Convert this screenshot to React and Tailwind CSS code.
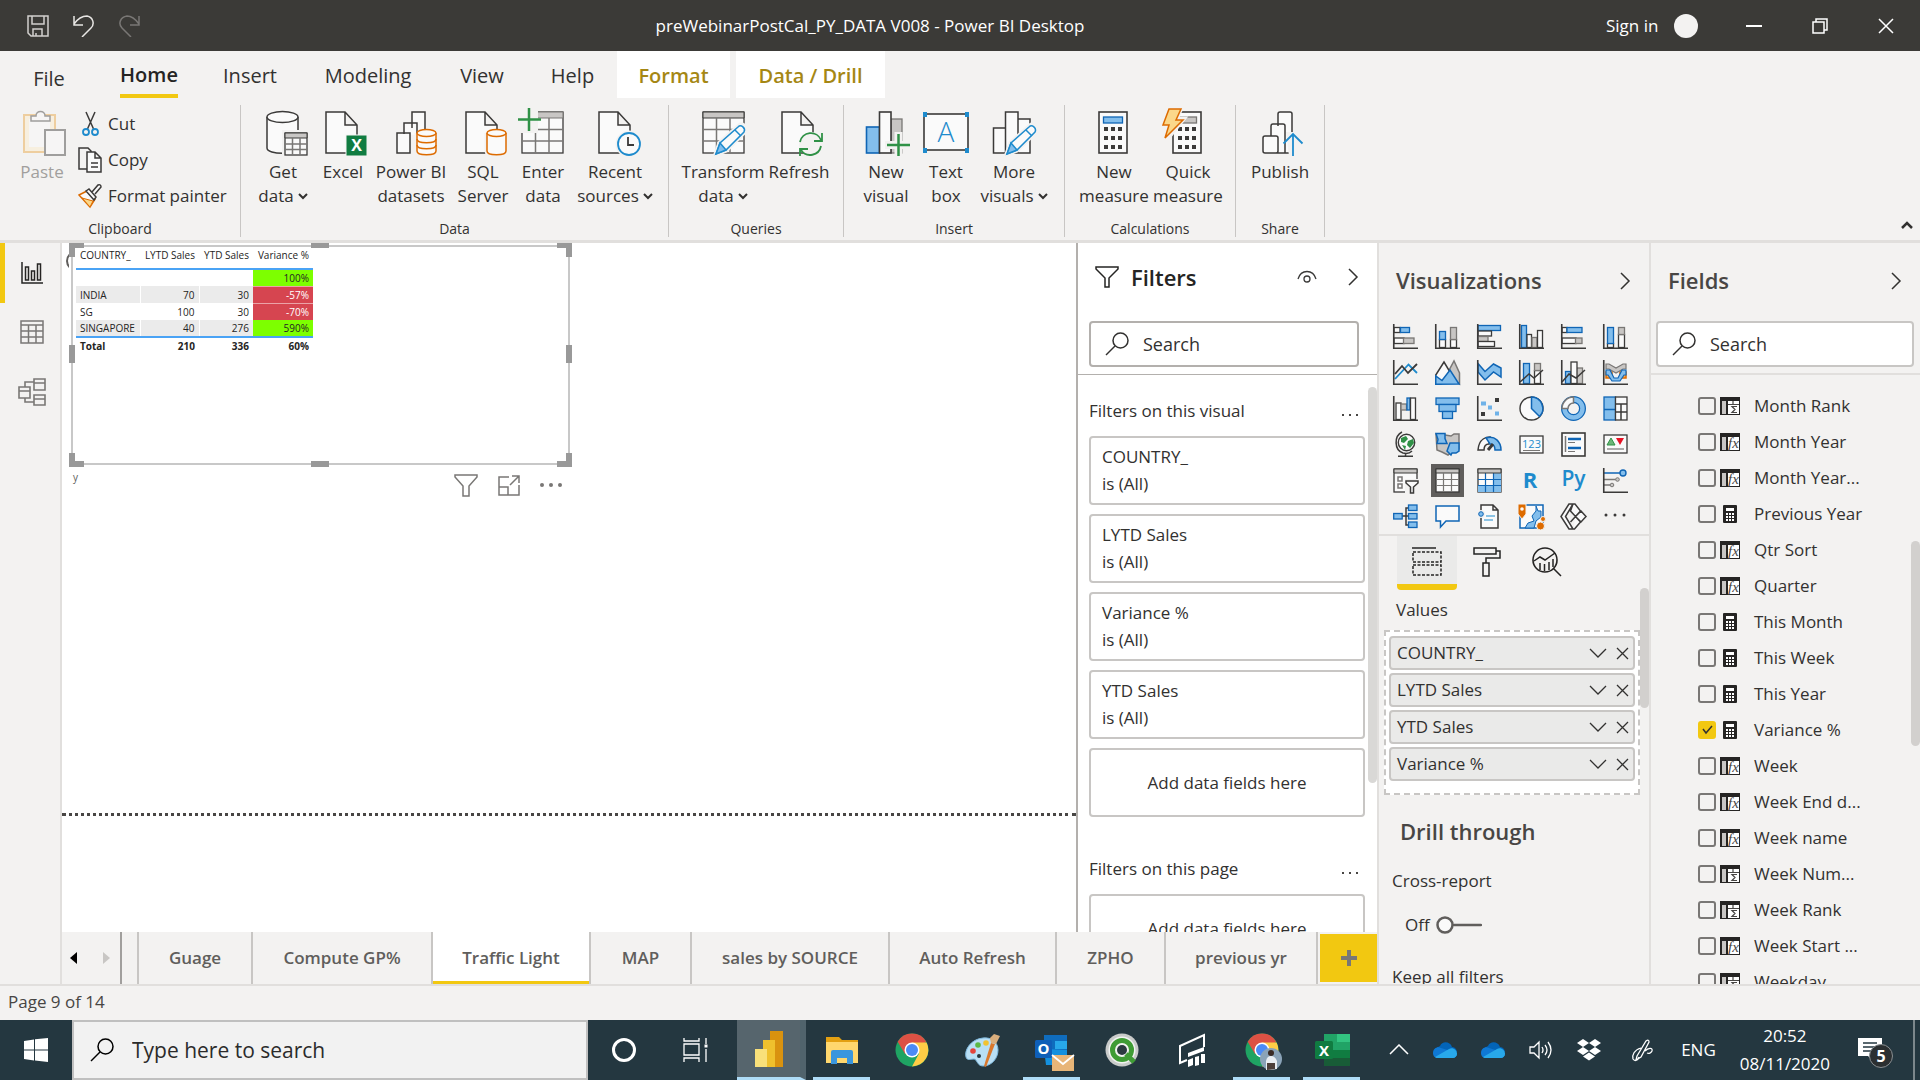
import { useState } from 'react';

const DARK = '#3b3a39';
const FILLS = { w: '#fafafa', b: '#83beec', g: '#c8c6c4', o: '#fff4e6' };
const STROKES = { w: DARK, b: '#0f65b5', g: '#797775', o: '#dd6b00' };

function Box({ x, y, w, h, k = 'w', s = 1.3 }) {
  return <rect x={x} y={y} width={w} height={h} fill={FILLS[k]} stroke={STROKES[k]} strokeWidth={s} />;
}

function Line({ d, c = DARK, s = 1.5, f = 'none', ...rest }) {
  return <path d={d} stroke={c} strokeWidth={s} fill={f} {...rest} />;
}

function Chevron({ d = 'M2 1l8 8-8 8', w = 12, h = 18, s = 1.5, c = '#323130' }) {
  return (
    <svg width={w} height={h} viewBox={`0 0 ${w} ${h}`} aria-hidden="true">
      <Line d={d} c={c} s={s} />
    </svg>
  );
}

function SearchIcon({ c = '#323130' }) {
  return (
    <svg width="24" height="24" viewBox="0 0 24 24" className="shrink-0" aria-hidden="true">
      <circle cx="15.5" cy="8.5" r="7.5" fill="none" stroke={c} strokeWidth="1.5" />
      <Line d="M10 14L1 23" c={c} />
    </svg>
  );
}

/* ---------- ribbon icons, drawn on a 46 x 48 box ---------- */

const Page = () => <Line d="M3 45V4h19l12 13v28zM22 4v13h12" f="#fafafa" />;

const Cylinder = ({ rings = false }) => (
  <g fill="#fafafa" stroke="#dd6b00" strokeWidth="1.5">
    <path d="M24 25v18c0 5 19 5 19 0V25" stroke="#f3f2f1" strokeWidth="5" />
    <path d="M24 25v18c0 5 19 5 19 0V25" />
    <ellipse cx="33.5" cy="25" rx="9.5" ry="3.5" />
    {rings && <path d="M24 31c0 5 19 5 19 0M24 37c0 5 19 5 19 0" fill="none" />}
  </g>
);

const Pencil = () => (
  <g>
    <path d="M15 46l4-11 19-17c3-3 8 1 6 5L25 42z" fill="#f3f2f1" stroke="#f3f2f1" strokeWidth="5" />
    <path d="M15 46l4-11 18-16c3-3 8 1 6 5L25 42z" fill="#fafafa" stroke="#1e8bcd" strokeWidth="1.5" />
    <path d="M15 46l4-11 6 7z" fill="#83beec" stroke="#1e8bcd" strokeWidth="1.5" />
    <path d="M34 22l6 6" stroke="#1e8bcd" strokeWidth="1.5" />
  </g>
);

function CalcBody({ x = 8, bar = 'b' }) {
  return (
    <g>
      <Box x={x} y={4} w={28} h={41} s={1.6} />
      <Box x={x + 4.5} y={9} w={19} h={6} k={bar} />
      {[19, 28, 37].map(y => [5, 12, 19].map(c => <rect key={`${y}-${c}`} x={x + c} y={y} width="4" height="4" fill={DARK} />))}
    </g>
  );
}

const RIBBON_ICONS = {
  paste: (
    <g opacity="0.45">
      <path d="M5 7h31v37H5z" fill="#fdeccb" stroke="#e8a33d" strokeWidth="2" />
      <path d="M10 11h21v28H10z" fill="#fafafa" />
      <path d="M12 13V8h5c0-6 9-6 9 0h5v5z" fill="#fafafa" stroke={DARK} strokeWidth="1.5" />
      <path d="M26 22h20v25H26z" fill="#fafafa" stroke={DARK} strokeWidth="2" />
    </g>
  ),
  get: (
    <g transform="translate(4 0)">
      <Line d="M3 9v31c0 7 31 7 31 0V9" f="#fafafa" />
      <ellipse cx="18.5" cy="9" rx="15.5" ry="5.5" fill="#fafafa" stroke={DARK} strokeWidth="1.5" />
      <path d="M18 22h28v26H18z" fill="#f3f2f1" />
      <Box x={21} y={25} w={22} h={22} />
      <path d="M21 25h22v5H21z" fill="#c8c6c4" stroke={DARK} />
      <Line d="M21 36h22M21 41.500h22M28.500 30v17M36 30v17" c="#797775" />
    </g>
  ),
  excel: (
    <g transform="translate(3 0)">
      <Page />
      <rect x="23" y="27" width="21" height="21" fill="#107c41" stroke="#f3f2f1" />
      <text x="33.5" y="43" textAnchor="middle" fontSize="16" fontWeight="700" fill="#fff">X</text>
    </g>
  ),
  datasets: (
    <g transform="translate(5 0)">
      <Line d="M19 20V4h13v24M11 26V15h13v12M4 25h13v20H4z" f="#fafafa" />
      <Cylinder rings />
    </g>
  ),
  sql: <g transform="translate(3 0)"><Page /><Cylinder /></g>,
  enter: (
    <g transform="translate(-2 0)">
      <Box x={4} y={4} w={41} h={41} />
      <path d="M16 4h29v6H16z" fill="#c8c6c4" stroke="#797775" />
      <Line d="M4 21.500h41M4 33h41M17.500 10v35M31 10v35" c="#797775" />
      <path d="M0 0h20v25H0z" fill="#f3f2f1" />
      <Line d="M11 0v23M0 11.500h23" c="#2f9146" s={2.5} />
    </g>
  ),
  recent: (
    <g transform="translate(4 0)">
      <Page />
      <circle cx="33" cy="36" r="13.5" fill="#f3f2f1" />
      <circle cx="33" cy="36" r="11" fill="#fafafa" stroke="#1e8bcd" strokeWidth="1.8" />
      <Line d="M32 29v8h6" s={1.8} />
    </g>
  ),
  transform: (
    <g transform="translate(1 0)">
      <Box x={2} y={4} w={41} h={41} />
      <path d="M2 4h41v6H2z" fill="#c8c6c4" stroke={DARK} />
      <Line d="M2 21.500h41M2 33h41M15.500 10v35M29 10v35" c="#797775" />
      <Pencil />
    </g>
  ),
  refresh: (
    <g transform="translate(3 0)">
      <Page />
      <circle cx="32" cy="36" r="12" fill="#f3f2f1" />
      <Line d="M21 34a11 11 0 0 1 21-2M42 38a11 11 0 0 1-20 4M43 25v8h-8M21 48v-7h8" c="#2f9146" s={1.8} />
    </g>
  ),
  visual: (
    <g transform="translate(2 0)">
      <Box x={1.5} y={19} w={13} h={26} k="b" s={1.6} />
      <Box x={26} y={11} w={11} h={34} k="g" />
      <Box x={14.5} y={4} w={11.5} h={41} s={1.6} />
      <path d="M20 33h26v8H20zM29.500 24h8v24h-8z" fill="#f3f2f1" />
      <Line d="M33.500 26v22M22 37h23" c="#2f9146" s={2.5} />
    </g>
  ),
  text: (
    <g>
      <Box x={1} y={6} w={44} h={36} s={1.6} />
      {[0, 42].map(x => [4, 40].map(y => <rect key={`${x}-${y}`} x={x} y={y} width="4" height="5" fill="#1e8bcd" />))}
      <text x="23" y="34" textAnchor="middle" fontSize="28" fontWeight="300" fill="#1e8bcd">A</text>
    </g>
  ),
  more: (
    <g transform="translate(1 0)">
      <Line d="M1.500 20h12v25h-12zM13.500 4H26v41H13.500zM26 11h12v34H26z" f="#fafafa" />
      <Pencil />
    </g>
  ),
  measure: <CalcBody />,
  quick: (
    <g transform="translate(-5 0)">
      <CalcBody x={13} bar="g" />
      <path d="M9 0h12l-5 11h7L6 32l3-15H3z" fill="#fbd88a" stroke="#f3f2f1" strokeWidth="5" />
      <path d="M9 1h12l-5 11h7L5 30l4-13H3z" fill="#fbd88a" stroke="#dd6b00" strokeWidth="1.5" />
    </g>
  ),
  publish: (
    <g transform="translate(3 0)">
      <Line d="M18 18V6q0-2 2-2h10q2 0 2 2v39H18M11 28V18q0-2 2-2h10q2 0 2 2v27H17M3 30q0-2 2-2h11q2 0 2 2v13q0 2-2 2H5q-2 0-2-2z" f="#fafafa" />
      <path d="M26 24h14v24H29z" fill="#f3f2f1" />
      <Line d="M33 48V26M23.500 35.500L33 26l9.500 9.500" c="#1e8bcd" s={1.8} />
    </g>
  ),
};

const RIBBON_GROUPS = [
  {
    name: 'Data',
    box: 'w-[428px]',
    items: [
      { icon: 'get', lines: ['Get', 'data'], drop: true, w: 'w-[60px]' },
      { icon: 'excel', lines: ['Excel'], w: 'w-[60px]' },
      { icon: 'datasets', lines: ['Power BI', 'datasets'], w: 'w-[76px]' },
      { icon: 'sql', lines: ['SQL', 'Server'], w: 'w-[68px]' },
      { icon: 'enter', lines: ['Enter', 'data'], w: 'w-[52px]' },
      { icon: 'recent', lines: ['Recent', 'sources'], drop: true, w: 'w-[92px]' },
    ],
  },
  {
    name: 'Queries',
    box: 'w-[175px]',
    items: [
      { icon: 'transform', lines: ['Transform', 'data'], drop: true, w: 'w-[84px]' },
      { icon: 'refresh', lines: ['Refresh'], w: 'w-[68px]' },
    ],
  },
  {
    name: 'Insert',
    box: 'w-[221px]',
    items: [
      { icon: 'visual', lines: ['New', 'visual'], w: 'w-[60px]' },
      { icon: 'text', lines: ['Text', 'box'], w: 'w-[60px]' },
      { icon: 'more', lines: ['More', 'visuals'], drop: true, w: 'w-[76px]' },
    ],
  },
  {
    name: 'Calculations',
    box: 'w-[171px]',
    items: [
      { icon: 'measure', lines: ['New', 'measure'], w: 'w-[74px]' },
      { icon: 'quick', lines: ['Quick', 'measure'], w: 'w-[74px]' },
    ],
  },
  {
    name: 'Share',
    box: 'w-[89px]',
    items: [{ icon: 'publish', lines: ['Publish'], w: 'w-[64px]' }],
  },
];

function RibbonButton({ icon, lines, drop, w, muted }) {
  return (
    <button className={`${w} flex flex-col items-center gap-1 whitespace-nowrap ${muted ? 'text-[#a19f9d]' : ''}`}>
      <svg width="46" height="48" viewBox="0 0 46 48" overflow="visible" aria-hidden="true">{RIBBON_ICONS[icon]}</svg>
      <span className="flex flex-col items-center leading-6">
        {lines.map((line, i) => (
          <span key={line} className="flex items-center gap-1">
            {line}
            {drop && i === lines.length - 1 && <Chevron d="M1 1l4 4 4-4" w={10} h={7} s={2} />}
          </span>
        ))}
      </span>
    </button>
  );
}

function TitleBar() {
  return (
    <header className="h-[51px] shrink-0 flex items-center bg-[#3b3a37] text-white text-[17px]">
      <div className="w-[160px] flex items-center gap-6 pl-[27px]">
        <button aria-label="Save">
          <svg width="22" height="22" viewBox="0 0 22 22"><Line d="M1 1h20v20H4l-3-3zM5 1v8h12V1M6 21v-7h9v7M9 21v-3" c="#d2d0ce" /></svg>
        </button>
        <button aria-label="Undo">
          <svg width="22" height="22" viewBox="0 0 22 22"><Line d="M1 1v9h9M1 9C6 2 10 1 14 1c6 1 8 8 4 12l-9 9" c="#e8e6e4" /></svg>
        </button>
        <button aria-label="Redo">
          <svg width="22" height="22" viewBox="0 0 22 22"><Line d="M20 1v9h-9M20 9C15 2 11 1 8 1 1 2-1 9 3 13l9 9" c="#797775" /></svg>
        </button>
      </div>
      <h1 className="flex-1 text-center">preWebinarPostCal_PY_DATA V008 - Power BI Desktop</h1>
      <div className="w-[340px] flex items-center pl-[26px]">
        <button>Sign in</button>
        <span className="ml-4 size-6 rounded-full bg-[#f3f2f1]" />
        <button aria-label="Minimize" className="ml-12"><Chevron d="M0 8h16" w={16} h={16} s={2} c="#fff" /></button>
        <button aria-label="Restore" className="ml-[50px]"><Chevron d="M1 4h11v11H1zM4 4V1h11v11h-3" w={16} h={16} c="#fff" /></button>
        <button aria-label="Close" className="ml-[50px]"><Chevron d="M1 1l14 14M15 1L1 15" w={16} h={16} c="#fff" /></button>
      </div>
    </header>
  );
}

function RibbonTabs() {
  const tabs = [
    ['Insert', 'w-[100px]'],
    ['Modeling', 'w-[136px]'],
    ['View', 'w-[92px]'],
    ['Help', 'w-[89px]'],
  ];
  return (
    <nav className="flex h-[54px] items-start text-xl leading-6 text-[#323130]">
      <button className="w-[98px] h-[47px] pt-2">File</button>
      <button className="w-[102px] h-[47px] flex justify-center">
        <span className="h-full flex items-center border-b-4 border-[#f2c811] pt-1 font-semibold text-[#252423]">Home</span>
      </button>
      {tabs.map(([name, w]) => <button key={name} className={`${w} h-[47px] pt-[2px]`}>{name}</button>)}
      <button className="w-[113px] h-[47px] bg-white pt-[2px] font-semibold text-[#a58714]">Format</button>
      <button className="ml-[6px] w-[149px] h-[47px] bg-white pt-[2px] font-semibold text-[#a58714]">Data / Drill</button>
    </nav>
  );
}

function Ribbon() {
  return (
    <section className="relative z-10 shrink-0 bg-[#f3f2f1] border-b-[3px] border-[#e1dfdd]">
      <RibbonTabs />
      <div className="flex h-[135px] pb-[3px] text-[17px] text-[#323130]">
        <div className="w-[241px] flex flex-col border-r border-[#c8c6c4] pt-[3px]">
          <div className="flex flex-1 pl-[14px]">
            <RibbonButton icon="paste" lines={['Paste']} w="w-[56px]" muted />
            <div className="flex flex-col gap-[10px] pl-2 pt-[3px] leading-6">
              <button className="flex items-center gap-[6px]">
                <svg width="24" height="26" viewBox="0 0 24 26" aria-hidden="true">
                  <Line d="M8 1l8 18M17 1L9 19" />
                  <g fill="none" stroke="#1e8bcd" strokeWidth="1.8"><circle cx="8" cy="21" r="3" /><circle cx="17" cy="21" r="3" /></g>
                </svg>
                Cut
              </button>
              <button className="flex items-center gap-[6px]">
                <svg width="24" height="26" viewBox="0 0 24 26" aria-hidden="true">
                  <Line d="M1 1h9l3 3v18H1z" />
                  <Line d="M9 5h8l6 6v14H9zM17 5v6h6M13 16h7M13 20h7" f="#fafafa" />
                </svg>
                Copy
              </button>
              <button className="flex items-center gap-[6px] whitespace-nowrap">
                <svg width="24" height="26" viewBox="0 0 24 26" aria-hidden="true">
                  <path d="M1 12l8-4 8 8-5 8z" fill="#fafafa" stroke="#dd6b00" strokeWidth="1.5" />
                  <path d="M4 15l11 3-3 6z" fill="#fbd88a" stroke="#dd6b00" />
                  <Line d="M8 8l3-2 7 8-2 3zM14 9l6-7q3-1 3 2l-6 7" f="#fafafa" />
                </svg>
                Format painter
              </button>
            </div>
          </div>
          <span className="text-center text-sm leading-4">Clipboard</span>
        </div>
        {RIBBON_GROUPS.map(g => (
          <div key={g.name} className={`${g.box} flex flex-col border-r border-[#c8c6c4] pt-[3px]`}>
            <div className="flex flex-1 items-start pl-3">
              {g.items.map(item => <RibbonButton key={item.icon} {...item} />)}
            </div>
            <span className="text-center text-sm leading-4">{g.name}</span>
          </div>
        ))}
        <button aria-label="Collapse ribbon" className="ml-auto mr-[6px] self-end">
          <Chevron d="M2 7l5-5 5 5" w={14} h={16} s={2.5} />
        </button>
      </div>
    </section>
  );
}

function ViewRail() {
  return (
    <nav className="w-[62px] shrink-0 flex flex-col border-r-2 border-[#e1dfdd] bg-[#f3f2f1]">
      <button aria-label="Report" className="h-[60px] flex items-center border-l-[5px] border-[#f2c811] pl-4">
        <svg width="22" height="22" viewBox="0 0 22 22"><Line d="M1 0v21h21M4.500 5h3v13h-3zM10.500 9h3v9h-3zM16.500 2h3v16h-3z" c="#252423" /></svg>
      </button>
      <button aria-label="Data" className="h-[58px] flex items-center justify-center pl-1">
        <svg width="24" height="24" viewBox="0 0 24 24"><Line d="M1 1h22v22H1zM1 5h22M1 11h22M1 17h22M8.500 5v18M16 5v18" c="#797775" /></svg>
      </button>
      <button aria-label="Model" className="h-[62px] flex items-center justify-center pl-1">
        <svg width="28" height="28" viewBox="0 0 28 28"><Line d="M16 1h11v11H16zM16 5h11M16 17h11v10H16zM16 21h11M1 9h11v11H1zM1 13h11M7 9V4h9M7 20v4h9" c="#797775" s={1.6} /></svg>
      </button>
    </nav>
  );
}

const SALES = [
  { country: '', lytd: '', ytd: '', variance: '100%', up: true },
  { country: 'INDIA', lytd: '70', ytd: '30', variance: '-57%' },
  { country: 'SG', lytd: '100', ytd: '30', variance: '-70%' },
  { country: 'SINGAPORE', lytd: '40', ytd: '276', variance: '590%', up: true },
];

function SalesTable() {
  return (
    <table className="table-fixed w-[237px] border-collapse text-[10px] leading-3 text-[#252423]">
      <thead>
        <tr className="h-[25px] border-b-2 border-[#4aa3f5] align-top text-left whitespace-nowrap">
          <th className="w-[64px] pt-[5px] pl-1 font-normal">COUNTRY_</th>
          <th className="w-[59px] pt-[5px] pr-1 text-right font-normal">LYTD Sales</th>
          <th className="w-[54px] pt-[5px] pr-1 text-right font-normal">YTD Sales</th>
          <th className="w-[60px] pt-[5px] pr-1 text-right font-normal">Variance %</th>
        </tr>
      </thead>
      <tbody>
        {SALES.map((r, i) => (
          <tr key={r.variance} className={`h-[17px] ${i % 2 ? 'bg-[#ebebeb]' : ''}`}>
            <td className="pl-1 border-r border-white">{r.country}</td>
            <td className="pr-1 text-right border-r border-white">{r.lytd}</td>
            <td className="pr-1 text-right">{r.ytd}</td>
            <td className={`pr-1 text-right ${r.up ? 'bg-[#7dff00]' : 'bg-[#d64550] text-white border-t border-[#eba2a7]'}`}>{r.variance}</td>
          </tr>
        ))}
      </tbody>
      <tfoot>
        <tr className="h-4 border-t-2 border-[#4aa3f5] font-bold">
          <td className="pl-1">Total</td>
          <td className="pr-1 text-right">210</td>
          <td className="pr-1 text-right">336</td>
          <td className="pr-1 text-right">60%</td>
        </tr>
      </tfoot>
    </table>
  );
}

function Canvas() {
  return (
    <main className="relative flex-1 min-w-0 bg-white overflow-hidden">
      <div className="absolute left-1 top-2 size-5 rounded-full border-2 border-[#605e5c]" />
      {/* selected visual with its resize handles */}
      <div className="absolute left-[7px] top-0 w-[503px] h-[224px] bg-white">
        <div className="absolute inset-[2px] border-2 border-[#c8c8c8]" />
        <div className="absolute left-0 top-0 w-[15px] h-[14px] border-l-[6px] border-t-[5px] border-[#999]" />
        <div className="absolute right-0 top-0 w-[15px] h-[14px] border-r-[6px] border-t-[5px] border-[#999]" />
        <div className="absolute left-0 bottom-0 w-[15px] h-[14px] border-l-[6px] border-b-[6px] border-[#999]" />
        <div className="absolute right-0 bottom-0 w-[15px] h-[14px] border-r-[6px] border-b-[6px] border-[#999]" />
        <div className="absolute left-[242px] top-0 w-[18px] h-[5px] bg-[#999]" />
        <div className="absolute left-[242px] bottom-0 w-[18px] h-[6px] bg-[#999]" />
        <div className="absolute left-0 top-[102px] w-[6px] h-[18px] bg-[#999]" />
        <div className="absolute right-0 top-[102px] w-[6px] h-[18px] bg-[#999]" />
        <div className="absolute left-[7px] top-[1px]"><SalesTable /></div>
      </div>
      <span className="absolute left-[11px] top-[226px] text-[10px] leading-4 text-[#605e5c]">y</span>
      <div className="absolute left-[392px] top-[230px] flex items-center gap-5">
        <button aria-label="Filters on visual">
          <svg width="24" height="24" viewBox="0 0 24 24"><Line d="M1 2h22v2l-8 9v10H9V13L1 4z" c="#797775" /></svg>
        </button>
        <button aria-label="Focus mode">
          <svg width="22" height="22" viewBox="0 0 22 22"><Line d="M11 3H1v18h20V11M1 13h9v8M12 11L21 2M14 2h7v7" c="#797775" /></svg>
        </button>
        <button aria-label="More options">
          <svg width="24" height="6" viewBox="0 0 24 6" fill="#797775"><circle cx="2" cy="3" r="2" /><circle cx="11" cy="3" r="2" /><circle cx="20" cy="3" r="2" /></svg>
        </button>
      </div>
      <div className="absolute inset-x-0 top-[570px] border-t-[3px] border-dotted border-[#484644]" />
    </main>
  );
}

function SearchBox({ id, border }) {
  return (
    <label htmlFor={id} className={`flex h-[46px] items-center gap-[14px] rounded-sm border-2 ${border} bg-white pl-[14px] text-[#323130]`}>
      <SearchIcon />
      <input id={id} type="text" placeholder="Search" aria-label="Search" className="min-w-0 flex-1 bg-transparent text-lg outline-none placeholder:text-[#323130]" />
    </label>
  );
}

function FilterCard({ name }) {
  return (
    <div className="h-[69px] rounded-sm border-2 border-[#c8c6c4] pl-[11px] pt-[5px] leading-[27px]">
      <p>{name}</p>
      <p>is (All)</p>
    </div>
  );
}

function DropCard() {
  return <div className="h-[69px] flex items-center justify-center rounded-sm border-2 border-[#c8c6c4]">Add data fields here</div>;
}

function FilterHeading({ children }) {
  return (
    <div className="flex items-center justify-between pr-[6px] leading-6">
      <h3>{children}</h3>
      <button aria-label="More options">
        <svg width="18" height="12" viewBox="0 0 18 12" fill="#484644"><path d="M1 9h2v2H1zM8 9h2v2H8zM15 9h2v2h-2z" /></svg>
      </button>
    </div>
  );
}

const FILTERS = ['COUNTRY_', 'LYTD Sales', 'Variance %', 'YTD Sales'];
const VALUES = ['COUNTRY_', 'LYTD Sales', 'YTD Sales', 'Variance %'];

function FiltersPane() {
  return (
    <aside className="relative w-[301px] shrink-0 flex flex-col overflow-hidden border-l-2 border-[#b3b0ad] bg-white text-[17px] text-[#323130]">
      <div className="h-[132px] shrink-0 border-b border-[#b3b0ad] pl-[11px] pr-[18px]">
        <div className="flex h-[68px] mb-[10px] items-center pl-[6px]">
          <svg width="24" height="24" viewBox="0 0 24 24" aria-hidden="true"><Line d="M1 2h22v2l-9 9v9h-4v-9L1 4z" c="#252423" /></svg>
          <h2 className="ml-3 text-[22px] font-semibold text-[#252423]">Filters</h2>
          <button aria-label="Hide filters" className="ml-auto mr-[30px]">
            <svg width="20" height="14" viewBox="0 0 20 14"><Line d="M1 9C4-1 16-1 19 9" s={1.3} /><circle cx="10" cy="9" r="3" fill="none" stroke={DARK} strokeWidth="1.3" /></svg>
          </button>
          <button aria-label="Collapse filters"><Chevron /></button>
        </div>
        <SearchBox id="filter-search" border="border-[#b3b0ad]" />
      </div>
      <div className="flex shrink-0 flex-col pl-[11px] pr-3 pt-6">
        <FilterHeading>Filters on this visual</FilterHeading>
        <div className="mt-[13px] flex flex-col gap-[9px]">
          {FILTERS.map(v => <FilterCard key={v} name={v} />)}
          <DropCard />
        </div>
        <div className="mt-10"><FilterHeading>Filters on this page</FilterHeading></div>
        <div className="mt-[13px]"><DropCard /></div>
      </div>
      <div className="absolute right-0 top-[144px] h-[396px] w-[9px] rounded-full bg-[#d9d8d6]" />
    </aside>
  );
}

const PAGES = [
  ['Guage', 'w-[114px]'],
  ['Compute GP%', 'w-[180px]'],
  ['Traffic Light', 'w-[158px]'],
  ['MAP', 'w-[101px]'],
  ['sales by SOURCE', 'w-[198px]'],
  ['Auto Refresh', 'w-[167px]'],
  ['ZPHO', 'w-[109px]'],
  ['previous yr', 'w-[152px]'],
];

function PageTabs() {
  const [active, setActive] = useState('Traffic Light');
  return (
    <nav className="flex h-[52px] shrink-0 bg-[#f3f2f1] text-[17px] font-semibold text-[#605e5c]">
      <div className="flex w-[60px] items-center justify-between border-r-2 border-[#a19f9d] pl-2 pr-[10px]">
        <button aria-label="Previous page"><svg width="7" height="12" viewBox="0 0 7 12"><path d="M7 0v12L0 6z" fill="#000" /></svg></button>
        <button aria-label="Next page"><svg width="7" height="12" viewBox="0 0 7 12"><path d="M0 0v12l7-6z" fill="#c8c6c4" /></svg></button>
      </div>
      <div className="w-[17px] border-r-2 border-[#c8c6c4]" />
      {PAGES.map(([name, w]) => (
        <button
          key={name}
          onClick={() => setActive(name)}
          className={`${w} whitespace-nowrap border-r-2 border-r-[#c8c6c4] ${name === active ? 'bg-white shadow-[inset_0_-3px_0_#f2c811]' : ''}`}
        >
          {name}
        </button>
      ))}
      <button aria-label="New page" className="my-[2px] ml-[2px] flex flex-1 items-center justify-center bg-[#f2c811]">
        <Chevron d="M8 0v16M0 8h16" w={16} h={16} s={4} c="#797775" />
      </button>
    </nav>
  );
}

/* ---------- visual gallery, drawn on a 25 x 25 box ---------- */

const Axis = () => <Line d="M.75 0v24.250H25" s={1.6} />;

const VISUALS = [
  ['Stacked bar chart', <><Box x={1} y={3.5} w={6} h={5} /><Box x={7.5} y={3.5} w={9} h={5} k="b" /><Box x={1} y={14} w={10} h={5.5} k="w" /><Box x={10.5} y={14} w={10.5} h={5.5} k="g" /><Axis /></>],
  ['Stacked column chart', <><Box x={4.5} y={15.5} w={6} h={8} /><Box x={4.5} y={7.5} w={6} h={8} k="b" /><Box x={15.5} y={15.5} w={6} h={8} /><Box x={15.5} y={3.5} w={6} h={12} k="g" /><Axis /></>],
  ['Clustered bar chart', <><Box x={1} y={1.5} w={22.5} h={5} k="b" /><Box x={1} y={7} w={13.5} h={5} /><Box x={1} y={12.5} w={10} h={5} k="g" /><Box x={1} y={17.5} w={16.5} h={5} /><Axis /></>],
  ['Clustered column chart', <><Box x={2.5} y={1.5} w={5} h={22} k="b" /><Box x={8} y={10.5} w={4.5} h={13} /><Box x={13} y={13.5} w={5} h={10} k="g" /><Box x={18.5} y={6.5} w={5} h={17} /><Axis /></>],
  ['100% stacked bar chart', <><Box x={1} y={3.5} w={5} h={5} /><Box x={6} y={3.5} w={15} h={5} k="b" /><Box x={1} y={14} w={14} h={5.5} /><Box x={14.5} y={14} w={6.5} h={5.5} k="g" /><Axis /></>],
  ['100% stacked column chart', <><Box x={4.5} y={19.5} w={6} h={4} /><Box x={4.5} y={3.5} w={6} h={16} k="b" /><Box x={15.5} y={10.5} w={6} h={13} /><Box x={15.5} y={3.5} w={6} h={7} k="g" /><Axis /></>],
  ['Line chart', <><Line d="M2 19L15.500 4.500 24 13" c="#1e8bcd" s={1.8} /><Line d="M2 14L9 6l6 7 9-9" s={1.8} /><Axis /></>],
  ['Area chart', <><Line d="M12 14l7-13 5.500 12v11z" c="#797775" f="#c8c6c4" /><Line d="M.75 24V15L9 2l6 10-9 12z" f="#fafafa" /><Line d="M.75 24.250V16L7 20.500 15 10l9 14z" c={STROKES.b} f={FILLS.b} /></>],
  ['Stacked area chart', <><Line d="M1 3.500l7 8 8.500-7.500L24 8v9l-7.500-5L8 20l-7-8z" c={STROKES.b} f={FILLS.b} /><Axis /></>],
  ['Line and stacked column chart', <><Box x={4.5} y={3.5} w={6} h={20} k="b" /><Box x={15.5} y={10.5} w={6} h={13} /><Box x={15.5} y={3.5} w={6} h={7} k="g" /><Line d="M1 22l9-8 5 4 9-8" /><Axis /></>],
  ['Line and clustered column chart', <><Box x={4.5} y={11.5} w={5} h={12} k="b" /><Box x={15.5} y={8} w={6} h={15.5} k="g" /><Box x={10} y={2} w={6} h={21.5} /><Line d="M1 22l7-8 7 4 9-8" /><Axis /></>],
  ['Ribbon chart', <><Line d="M3 12h6v6H3zM17 12h6v6h-6z" c="#dd6b00" f="#f7a64a" /><Line d="M3 4h3l7 4 7-4h3v5h-3l-7 4-7-4H3z" c="#797775" f="#c8c6c4" s={1.2} /><Line d="M3 10h4l4 8h4l4-8h4v5h-2l-4 6H9l-4-6H3z" c={STROKES.b} f={FILLS.b} s={1.2} /><Axis /></>],
  ['Waterfall chart', <><Box x={3} y={7} w={5} h={16.5} /><Box x={8} y={8} w={5.5} h={6} k="g" /><Box x={14} y={2} w={3} h={12} k="b" /><Box x={17.5} y={2} w={5} h={21.5} /><Axis /></>],
  ['Funnel', <><Box x={1} y={2} w={23} h={6.5} k="b" /><Box x={4} y={8.5} w={17} h={7} k="b" /><Box x={7.5} y={15.5} w={10} h={7} k="b" /></>],
  ['Scatter chart', <><path d="M18 2h4v4h-4zM4 16h4v4H4z" fill={DARK} /><path d="M4 5.500h5v4H4zM11 9.500h4v4h-4zM18 15.500h4v4h-4z" fill="#6fb2e8" /><Axis /></>],
  ['Pie chart', <><circle cx="12.5" cy="12.5" r="11.5" fill="#fafafa" stroke={DARK} strokeWidth="1.4" /><Line d="M12.500 12.500V1a11.500 11.500 0 0 1 8 19.500z" c={STROKES.b} f={FILLS.b} /></>],
  ['Donut chart', <><circle cx="12.5" cy="12.5" r="9" fill="none" stroke="#0f65b5" strokeWidth="7" /><circle cx="12.5" cy="12.5" r="9" fill="none" stroke="#83beec" strokeWidth="4.5" /><Line d="M1 12.500A11.500 11.500 0 0 1 12.500 1v6A5.500 5.500 0 0 0 7 12.500z" c="#797775" f="#fafafa" /></>],
  ['Treemap', <><Box x={1} y={1} w={11.5} h={23} k="b" /><Line d="M1 13.500h11.500" c={STROKES.b} /><Box x={12.5} y={1} w={11.5} h={23} /><Line d="M12.500 8H24M18 8v16M12.500 16H24" /></>],
  ['Map', <><circle cx="13.5" cy="10.5" r="8.2" fill="#fafafa" stroke={DARK} strokeWidth="1.4" /><path d="M8 6l5-2 2 3-4 4-3-1zM15 9l5-2 1 4-4 5-3-3zM9 13l4 1-1 4z" fill="#2f9146" /><Line d="M9 0C1 4 1 18 10 21c4 1 7 0 9-2M12.500 21v3M5 24.250h15" /></>],
  ['Filled map', <><Line d="M1 2l9 1 6 1 3-2h5v15l-6 2-5 4-6-3-5-2z" c="#797775" f="#c8c6c4" /><Line d="M1 1.500h9v5l2 5H2l1-4zM24 11v8l-3 2h-4l-1 2-4-4 3-8z" c={STROKES.b} f={FILLS.b} /></>],
  ['Gauge', <><Line d="M1 18C2 6 10 5 13 5l-1 7c-4 0-5 3-5 6z" f="#fafafa" /><Line d="M9 6c9-3 15 4 15 12h-6c0-4-2-6-5-6z" c={STROKES.b} f={FILLS.b} /><Line d="M11 18l5-6" s={3} /></>],
  ['Card', <><Box x={1} y={4} w={23} h={17} /><text x="12.500" y="16" textAnchor="middle" fontSize="11" fill="#1e8bcd">123</text><Line d="M4 18.500h17" s={1} c="#797775" /></>],
  ['Multi-row card', <><Box x={1} y={1} w={23} h={23} s={1.6} /><Line d="M4.500 4v16" c="#797775" /><Line d="M7 7h13M7 16h13" c="#0f65b5" s={2.5} /><Line d="M7 10.500h7M7 19.500h7" c="#797775" s={1.2} /></>],
  ['KPI', <><Box x={1} y={3} w={23} h={18} /><path d="M4 13l4-7 4 7z" fill="#6cb577" stroke="#2f9146" /><path d="M13 6h8l-4 7z" fill="#e81123" /><Line d="M4 17h17" c="#797775" s={1.2} /></>],
  ['Slicer', <><Box x={1} y={1} w={23} h={23} /><path d="M1 1h23v4H1z" fill="#c8c6c4" stroke={DARK} /><Line d="M5 9h4v4H5zM5 16h4v4H5z" c="#797775" /><path d="M12 11h14v16H12z" fill="#f3f2f1" /><Line d="M13 13h12v2l-4.500 4v6h-3v-6L13 15z" f="#fafafa" /></>],
  ['Table', <><Box x={1} y={1} w={23} h={23} /><path d="M1 1h23v4H1z" fill="#c8c6c4" stroke={DARK} /><Line d="M1 11.500h23M1 17.500h23M8.500 5v19M16.500 5v19" c="#797775" s={1.2} /></>],
  ['Matrix', <><Box x={1} y={1} w={23} h={23} /><path d="M16.500 5H24v19H1v-6h15.500z" fill="#83beec" /><Line d="M1 11.500h23M1 17.500h23M8.500 5v19M16.500 5v19" c="#0f65b5" s={1.2} /><path d="M1 1h23v4H1z" fill="#c8c6c4" stroke={DARK} /></>],
  ['R script visual', <text x="11" y="20" textAnchor="middle" fontSize="22" fontWeight="700" fill="#1e8bcd">R</text>],
  ['Python visual', <text x="12.500" y="18" textAnchor="middle" fontSize="21" fontWeight="600" fill="#1e8bcd">Py</text>],
  ['Key influencers', <><Line d="M1 5h16" c="#0f65b5" /><circle cx="20" cy="5" r="3" fill="#83beec" stroke="#0f65b5" strokeWidth="1.4" /><Line d="M1 11.500h12M1 17h6" c="#797775" /><g fill="#c8c6c4" stroke="#797775"><circle cx="14.500" cy="11.500" r="1.800" /><circle cx="9" cy="17" r="1.800" /></g><Axis /></>],
  ['Decomposition tree', <><Line d="M9 12h7M16 4h-3v17h3" /><Box x={0.7} y={9.500} w={8.500} h={5.500} k="b" /><Box x={15.500} y={1} w={8.500} h={5.500} k="b" /><Box x={15.500} y={9.500} w={8.500} h={5.500} k="b" /><Box x={15.500} y={18} w={8.500} h={5.500} k="b" /></>],
  ['Q&A', <Line d="M1 2h23v15H11l-5.500 6v-6H1z" c="#0f65b5" f="#fafafa" />],
  ['Smart narrative', <><Line d="M4 1h12l5 5v18H4zM16 1v5h5" f="#fafafa" /><circle cx="4" cy="10" r="4" fill="#f3f2f1" /><circle cx="4" cy="10" r="2.300" fill="#83beec" stroke="#0f65b5" /><Line d="M9 12h9M7 16h9" c="#1e8bcd" s={1.2} /></>],
  ['ArcGIS map', <><Line d="M1 1h23v23H1z" c="#0f65b5" f="#fafafa" /><path d="M17 2v5l-4 5 2 5-6 2-3 5h9l2-7 5-4V7h-3z" fill="#83beec" stroke="#0f65b5" /><path d="M-1 0h8v10l-4 5-4-5z" fill="#dd6b00" stroke="#f3f2f1" /><circle cx="3" cy="5" r="1.800" fill="#fafafa" /><circle cx="21.500" cy="22" r="4" fill="#dd6b00" stroke="#f3f2f1" /><circle cx="24" cy="15" r="2.500" fill="#dd6b00" stroke="#f3f2f1" /></>],
  ['Power Apps', <Line d="M8 0L0 12.500 8 25h4L4.500 12.500 12 0zM12 0h2l5.500 7-5 5.500-5-5.500zM20 7l5 5.500-5 5.500-5.500-5.500zM14.500 12.500l5 5.500-6 7h-1M9.500 18l5-5.500" f="#fafafa" />],
  ['More visuals', <g fill={DARK}><circle cx="3" cy="11" r="1.500" /><circle cx="12" cy="11" r="1.500" /><circle cx="21" cy="11" r="1.500" /></g>],
];

function PaneTitle({ children }) {
  return (
    <div className="flex h-[75px] shrink-0 items-center justify-between pl-[17px] pr-[18px]">
      <h2 className="text-[22px] font-semibold text-[#484644]">{children}</h2>
      <button aria-label={`Collapse ${children}`}><Chevron /></button>
    </div>
  );
}

function VisualizationsPane() {
  return (
    <aside className="relative w-[272px] shrink-0 flex flex-col overflow-hidden border-l-2 border-[#e1dfdd] bg-[#f3f2f1] text-[17px] text-[#323130]">
      <PaneTitle>Visualizations</PaneTitle>
      <div className="grid h-[216px] w-[252px] shrink-0 grid-cols-6 grid-rows-6 ml-[5px]">
        {VISUALS.map(([name, art]) => (
          <button key={name} aria-label={name} className="flex items-center justify-center">
            <span className={name === 'Table' ? 'bg-[#605e5c] p-1' : ''}>
              <svg width="25" height="25" viewBox="0 0 25 25" overflow="visible">{art}</svg>
            </span>
          </button>
        ))}
      </div>
      <div className="flex shrink-0 border-t-2 border-[#e1dfdd] pl-[18px]">
        <button aria-label="Fields" className="flex h-[54px] w-[60px] items-center justify-center rounded-b border-b-[6px] border-[#f2c811] bg-[#eaeae9] pt-1">
          <svg width="30" height="30" viewBox="0 0 30 30"><Line d="M0 1h24" c="#252423" /><Line d="M1 5h28v10H1zM1 18h28v10H1z" c="#252423" strokeDasharray="3 1.5" /></svg>
        </button>
        <button aria-label="Format" className="flex h-12 w-[60px] items-center justify-center pt-1">
          <svg width="28" height="30" viewBox="0 0 28 30"><Line d="M1 1h22v6H1zM23 4h4v7H13v5M10 16h6v13h-6z" c="#252423" /></svg>
        </button>
        <button aria-label="Analytics" className="flex h-12 w-[60px] items-center justify-center pt-1">
          <svg width="30" height="30" viewBox="0 0 30 30"><circle cx="13" cy="13" r="12" fill="none" stroke="#252423" strokeWidth="1.6" /><Line d="M21.500 21.500L29 29M2 14l6-4 5 3 10-7M8 16v7M12.500 17v7M17 15v8M21 12v8" c="#252423" /></svg>
        </button>
      </div>
      <div className="flex shrink-0 flex-col pl-[5px] pr-[9px]">
        <h3 className="pl-3 pt-2 leading-6">Values</h3>
        <div className="mt-2 flex flex-col gap-[3px] border-2 border-dashed border-[#c8c6c4] bg-white px-[3px] pt-1 pb-3">
          {VALUES.map(v => (
            <div key={v} className="flex h-[34px] items-center rounded-sm border-2 border-[#c8c6c4] bg-[#eaeae9] pl-[6px] pr-1">
              <span className="flex-1">{v}</span>
              <button aria-label={`${v} options`}><Chevron d="M1 1l8 8 8-8" w={18} h={10} s={1.3} /></button>
              <button aria-label={`Remove ${v}`} className="ml-[9px]"><Chevron d="M1 1l11 11M12 1L1 12" w={13} h={13} s={1.3} /></button>
            </div>
          ))}
        </div>
        <h2 className="mt-5 pl-4 text-[22px] leading-8 font-semibold text-[#484644]">Drill through</h2>
        <h3 className="mt-[22px] pl-2 leading-6">Cross-report</h3>
        <label className="mt-5 flex items-center gap-[6px] pl-[21px] leading-6">
          Off
          <input type="checkbox" role="switch" className="peer sr-only" />
          <svg width="46" height="18" viewBox="0 0 46 18" aria-hidden="true">
            <Line d="M18 9h27" c="#605e5c" s={2.5} strokeLinecap="round" /><circle cx="9" cy="9" r="7.5" fill="#fafafa" stroke="#605e5c" strokeWidth="2.500" />
          </svg>
        </label>
        <h3 className="mt-7 pl-2 leading-6">Keep all filters</h3>
      </div>
      <div className="absolute right-0 top-[345px] h-[120px] w-[9px] rounded-full bg-[#d2d0ce]" />
    </aside>
  );
}

const FIELDS = [
  ['Month Rank', 'sum'],
  ['Month Year', 'fx'],
  ['Month Year...', 'fx'],
  ['Previous Year', 'calc'],
  ['Qtr Sort', 'fx'],
  ['Quarter', 'fx'],
  ['This Month', 'calc'],
  ['This Week', 'calc'],
  ['This Year', 'calc'],
  ['Variance %', 'calc'],
  ['Week', 'fx'],
  ['Week End d...', 'fx'],
  ['Week name', 'fx'],
  ['Week Num...', 'sum'],
  ['Week Rank', 'sum'],
  ['Week Start ...', 'fx'],
  ['Weekday', 'sum'],
];

function FieldIcon({ type }) {
  if (type === 'calc') {
    return (
      <svg width="20" height="18" viewBox="0 0 20 18" aria-hidden="true">
        <rect x="3" width="14" height="18" rx="1" fill="#252423" />
        <path d="M6 3h8v3H6z" fill="#fff" />
        {[8, 11, 14].map(y => [6, 9, 12].map(x => <rect key={`${x}-${y}`} x={x} y={y} width="2" height="2" fill="#fff" />))}
      </svg>
    );
  }
  return (
    <svg width="20" height="18" viewBox="0 0 20 18" aria-hidden="true">
      <path d="M0 0h20v18H0z" fill="#252423" />
      <path d="M2 4h4v13H2z" fill="#c8c6c4" />
      <path d="M8 4h11v13H8z" fill="#fff" />
      {type === 'sum'
        ? <Line d="M8 7.500h11M13 4v3M17 9.500h-5l3 3-3 3h5" c="#484644" s={1.2} />
        : <text x="8" y="15" fontSize="15" fontStyle="italic" fontFamily="Liberation Serif, serif" fill="#484644">fx</text>}
    </svg>
  );
}

function FieldsPane() {
  const [picked, setPicked] = useState(['Variance %']);
  const toggle = name => setPicked(p => (p.includes(name) ? p.filter(n => n !== name) : [...p, name]));
  return (
    <aside className="relative w-[271px] shrink-0 flex flex-col overflow-hidden border-l-2 border-[#e1dfdd] bg-[#f3f2f1] text-[17px] text-[#323130]">
      <PaneTitle>Fields</PaneTitle>
      <div className="border-b-2 border-[#e1dfdd] pt-[3px] pl-[5px] pr-[6px] pb-[6px]">
        <SearchBox id="field-search" border="border-[#c8c6c4]" />
      </div>
      <ul className="pt-[13px] pl-[47px]">
        {FIELDS.map(([name, type]) => (
          <li key={name} className="h-9">
            <label className="relative flex h-9 items-center gap-1">
              <input
                type="checkbox"
                checked={picked.includes(name)}
                onChange={() => toggle(name)}
                className="size-[18px] appearance-none rounded-[3px] border-2 border-[#797775] checked:border-[#f2c811] checked:bg-[#f2c811]"
              />
              {picked.includes(name) && (
                <span className="absolute left-1 top-[13px]"><Chevron d="M1 4l3 4 6-7" w={11} h={10} /></span>
              )}
              <FieldIcon type={type} />
              <span className="ml-[10px]">{name}</span>
            </label>
          </li>
        ))}
      </ul>
      <div className="absolute right-0 top-[298px] h-[205px] w-[9px] rounded-full bg-[#d2d0ce]" />
    </aside>
  );
}

/* ---------- Windows taskbar ---------- */

const ChromeLogo = () => (
  <g>
    <circle cx="17" cy="17" r="16.500" fill="#1fa463" />
    <path d="M17 17L2.700 8.800A16.500 16.500 0 0 1 31.300 8.800z" fill="#dd5144" />
    <path d="M17 9.500h14.600A16.500 16.500 0 0 1 17 33.500l7-13z" fill="#ffcd46" />
    <path d="M2.700 8.800l7.500 12.500L17 9.500z" fill="#dd5144" />
    <circle cx="17" cy="17" r="7.500" fill="#fff" />
    <circle cx="17" cy="17" r="6" fill="#4c8bf5" />
  </g>
);

const APPS = [
  ['File Explorer', true, <>
    <path d="M1 4h13l3 3h16v22H1z" fill="#e3a012" /><path d="M1 9h32v21H1z" fill="#ffd76e" />
    <path d="M6 31V19q0-2 2-2h18q2 0 2 2v12h-6v-6H12v6z" fill="#3a96dd" />
  </>],
  ['Chrome', false, <ChromeLogo />],
  ['Paint', false, <>
    <path d="M18 5C6 6-1 17 1 24c1 4 5 2 8 2s3 7 9 7c9 0 15-8 15-16S26 4 18 5z" fill="#b9dff5" stroke="#7db7dc" />
    <circle cx="8" cy="18" r="2.800" fill="#e2433c" /><circle cx="13" cy="12" r="2.800" fill="#5bb946" /><circle cx="21" cy="10" r="2.800" fill="#f1c232" /><circle cx="14" cy="23" r="2" fill="#23363f" />
    <path d="M19 33l7-23 4 1-9 23z" fill="#d9782d" /><path d="M26 10l-1-5 4-4 6 2-4 8z" fill="#d9ae7d" />
  </>],
  ['Outlook', true, <>
    <path d="M9 2h23v22H9z" fill="#0f6cbd" /><path d="M20 8h12v8H20z" fill="#28a8ea" /><path d="M9 16l23 1v15H11z" fill="#1490df" />
    <rect y="7" width="17" height="18" rx="1.500" fill="#0f5fb8" /><text x="8.500" y="21" textAnchor="middle" fontSize="15" fontWeight="700" fill="#fff">O</text>
    <path d="M17 22h22v16H17z" fill="#e8b578" /><path d="M17 22l11 9 11-9" fill="none" stroke="#fff" strokeWidth="1.800" />
  </>],
  ['Qlik', false, <>
    <circle cx="17" cy="17" r="16.500" fill="#c9cbca" /><circle cx="17" cy="17" r="13.500" fill="#f2f3f2" />
    <circle cx="17" cy="17" r="9.500" fill="none" stroke="#3f9c35" strokeWidth="5" /><circle cx="17" cy="17" r="5" fill="#2b3a40" /><path d="M21 21l8 8" stroke="#3f9c35" strokeWidth="5" />
  </>],
  ['Gallery', false, <>
    <g fill="none" stroke="#fff" strokeWidth="2"><path d="M29 14V2L5 13v17l7-3" /></g>
    <path d="M13 20l16-6v4l-16 6zM13 27l5-2v7l-5 2zM20 24l4-1v9l-4 1zM26 21h4v9h-4z" fill="#fff" />
  </>],
  ['Chrome profile', true, <>
    <ChromeLogo /><circle cx="26" cy="26" r="11" fill="#8aa3b8" /><path d="M21 37v-9q1-5 5-5t6 5v8z" fill="#e8edf2" /><path d="M22 37v-7h8v6z" fill="#4c3f3a" /><circle cx="26" cy="20" r="3" fill="#3a2b25" />
  </>],
  ['Excel', true, <>
    <path d="M9 1h26v32H9z" fill="#21a366" /><path d="M22 1h13v8H22z" fill="#33c481" /><path d="M9 17h26v8H9z" fill="#107c41" /><path d="M9 25h26v8H9z" fill="#185c37" />
    <rect y="8" width="18" height="18" rx="1.500" fill="#107c41" /><text x="9" y="22.500" textAnchor="middle" fontSize="15" fontWeight="700" fill="#fff">X</text>
  </>],
];

const OneDrive = () => (
  <svg width="24" height="16" viewBox="0 0 24 16" aria-hidden="true">
    <path d="M2 10C2 5 6 5 7 4c2-5 10-5 12 1 3 0 5 3 5 5z" fill="#0364b8" />
    <path d="M0 11c0-5 5-7 8-5l16 5c0 3-2 5-5 5H5c-3 0-5-2-5-5z" fill="#0f78d4" />
    <path d="M2 15L16 7c4-2 8 1 8 5 0 2-2 4-4 4H5c-1 0-2 0-3-1z" fill="#28a8ea" />
  </svg>
);

function Taskbar() {
  return (
    <footer className="flex h-[60px] shrink-0 items-stretch bg-[#243740] text-white">
      <button aria-label="Start" className="flex w-[72px] items-center justify-center">
        <svg width="24" height="24" viewBox="0 0 24 24" fill="#fff"><path d="M0 3l10-1.500V11.500H0zM11 1.300L24 0v11.500H11zM0 12.500h10v10L0 21zM11 12.500h13V24l-13-1.500z" /></svg>
      </button>
      <label htmlFor="task-search" className="flex w-[516px] items-center gap-[18px] border-2 border-[#c0c0c0] bg-[#f2f2f2] pl-4 text-black">
        <SearchIcon c="#000" />
        <input id="task-search" type="text" placeholder="Type here to search" aria-label="Type here to search" className="flex-1 bg-transparent pt-[2px] text-[21px] outline-none placeholder:text-[#2b2b2b]" />
      </label>
      <button aria-label="Cortana" className="flex w-[72px] items-center justify-center">
        <span className="size-6 rounded-full border-[3px] border-white" />
      </button>
      <button aria-label="Task view" className="flex w-[72px] items-center justify-center">
        <svg width="26" height="24" viewBox="0 0 26 24"><Line d="M1 0v3h15V0M1 24v-4h15v4M1 6h15v11H1zM23 0v6M23 11v13" c="#fff" s={1.3} /><path d="M21.500 6.500h3v3h-3z" fill="#fff" /></svg>
      </button>
      <button aria-label="Power BI" className="ml-[5px] mr-[1px] flex w-[69px] items-center justify-center border-b-[3px] border-[#aedcf7] border-r-[6px] border-r-[#50636c] bg-[#56656d]">
        <svg width="28" height="36" viewBox="0 0 28 36"><path d="M15 0h13v36H15z" fill="#d9920f" /><path d="M8 9h12v27H8z" fill="#efc02d" /><path d="M0 18h12v18H0z" fill="#f9e07a" /></svg>
      </button>
      {APPS.map(([name, open, art]) => (
        <button key={name} aria-label={name} className="relative flex w-[70px] items-center justify-center">
          <svg width="35" height="34" viewBox="0 0 35 34" overflow="visible">{art}</svg>
          {open && <span className="absolute bottom-0 left-[6px] h-[3px] w-[57px] bg-[#aedcf7]" />}
        </button>
      ))}
      <div className="ml-auto flex items-center gap-6 text-[17px]">
        <button aria-label="Show hidden icons"><Chevron d="M1 10l9-9 9 9" w={20} h={12} c="#fff" /></button>
        <OneDrive />
        <OneDrive />
        <svg width="24" height="20" viewBox="0 0 24 20" aria-hidden="true"><Line d="M1 7h4l5-5v16l-5-5H1zM13 7q2 3 0 6M16 5q4 5 0 10M19 2q6 8 0 16" c="#fff" s={1.3} /></svg>
        <svg width="24" height="22" viewBox="0 0 24 22" fill="#fff" aria-hidden="true"><path d="M6 0l6 4-6 4-6-4zM18 0l6 4-6 4-6-4zM6 8l6 4-6 4-6-4zM18 8l6 4-6 4-6-4zM12 13.500l6 4-6 4-6-4z" /></svg>
        <svg width="32" height="24" viewBox="0 0 32 24" aria-hidden="true"><Line d="M12 18L21 3q3-2 3 1l-8 15-5 3zM16 10c-7 2-9 7-8 11 2 3 5 1 6-2M20 13c3-3 8-4 7 0-1 2-3 3-5 2" c="#fff" s={1.3} /></svg>
        <span>ENG</span>
        <div className="text-center leading-7">
          <p>20:52</p>
          <p>08/11/2020</p>
        </div>
        <button aria-label="Notifications" className="relative ml-1 mr-[20px] h-9 w-[35px]">
          <svg width="25" height="25" viewBox="0 0 25 25"><path d="M0 0h24v18h-8v6l-6-6H0z" fill="#fff" /><Line d="M5 5h14M5 9h14M5 13h14" c="#243740" /></svg>
          <span className="absolute right-0 bottom-0 flex size-6 items-center justify-center rounded-full border border-[#8a8f92] bg-[#2b2f31] text-base font-bold">5</span>
        </button>
      </div>
      <div className="w-[7px] border-l-2 border-[#7c878c]" />
    </footer>
  );
}

export default function App() {
  return (
    <div className="flex h-screen flex-col overflow-hidden bg-[#f3f2f1] font-['Open_Sans','Noto_Sans',sans-serif]">
      <TitleBar />
      <Ribbon />
      <div className="flex min-h-0 flex-1">
        <ViewRail />
        <div className="flex min-w-0 flex-1 flex-col">
          <div className="flex min-h-0 flex-1">
            <Canvas />
            <FiltersPane />
          </div>
          <PageTabs />
        </div>
        <VisualizationsPane />
        <FieldsPane />
      </div>
      <div className="h-9 shrink-0 border-t-2 border-[#e1dfdd] pl-2 text-[17px] leading-8 text-[#484644]">Page 9 of 14</div>
      <Taskbar />
    </div>
  );
}
